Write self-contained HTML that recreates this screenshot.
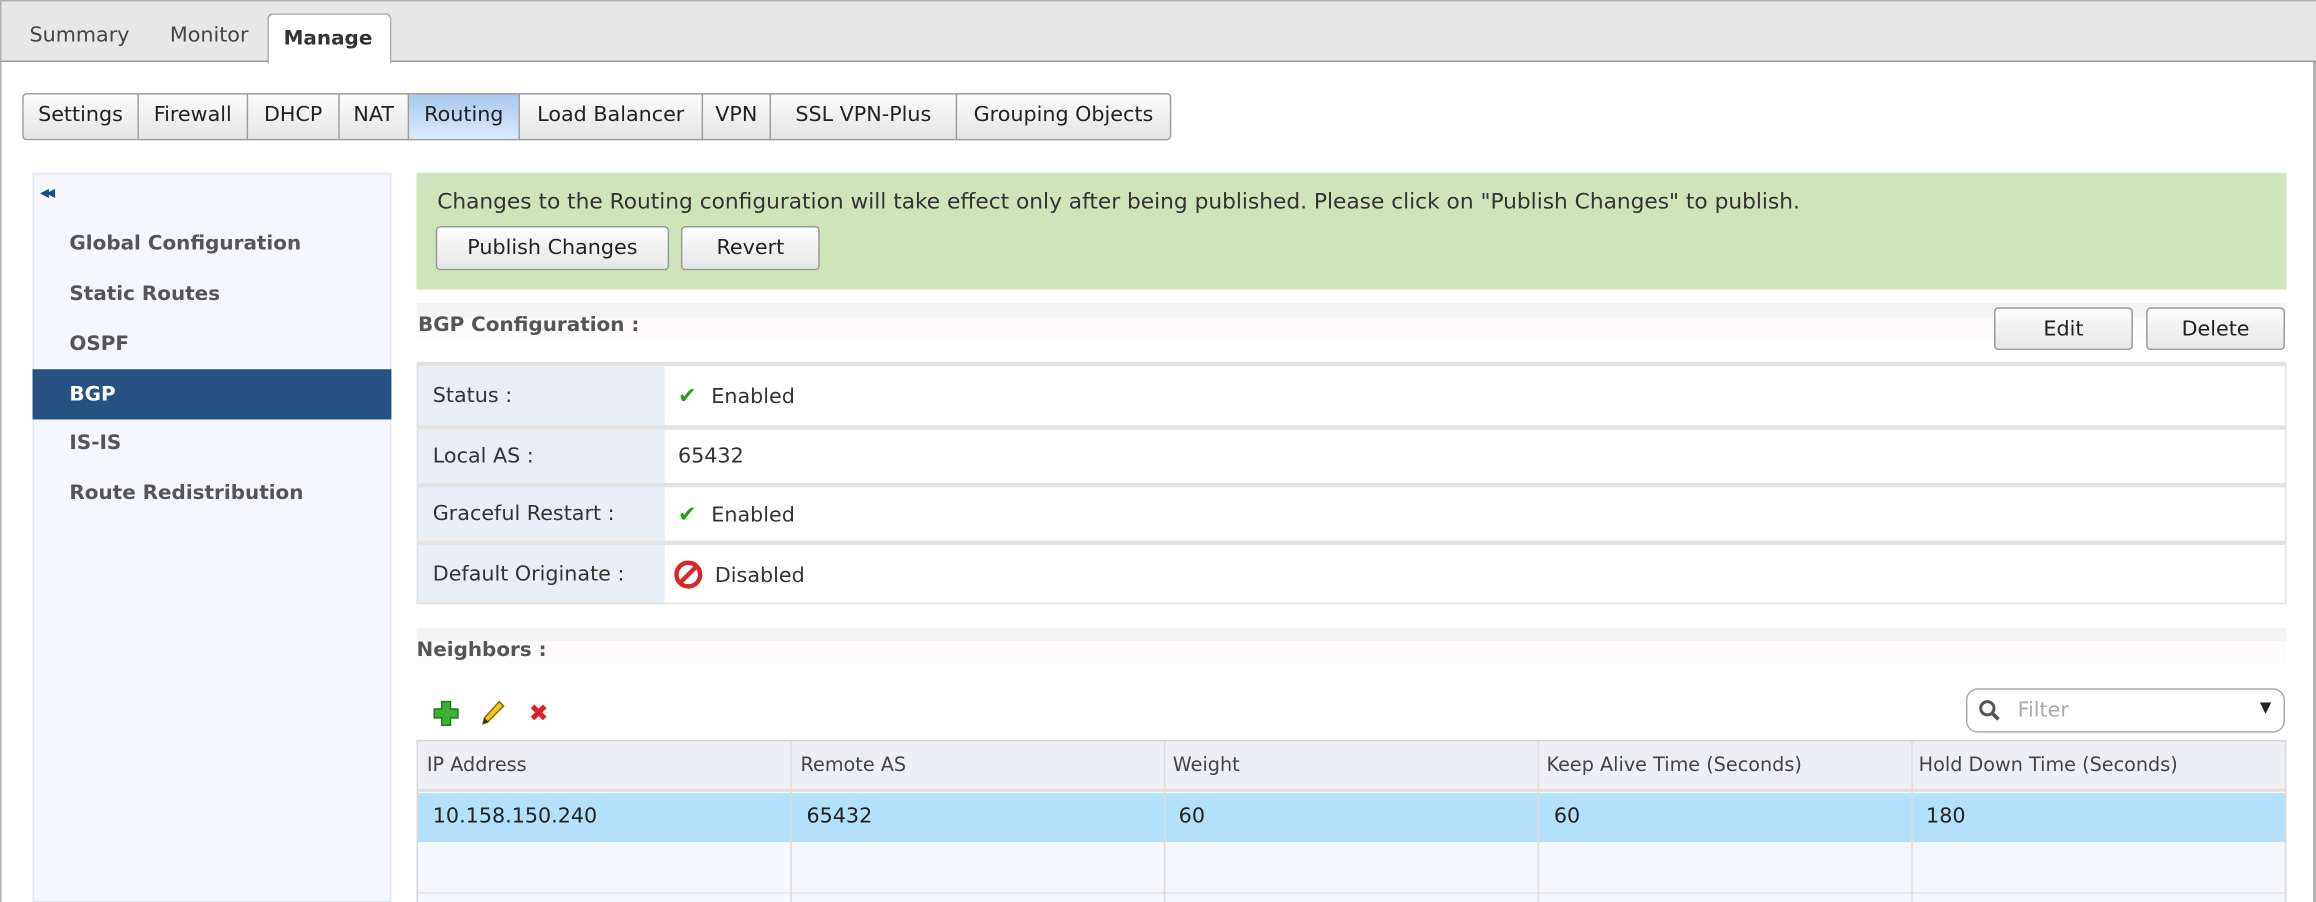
<!DOCTYPE html>
<html><head><style>
html,body{margin:0;padding:0;width:2316px;height:902px;overflow:hidden;background:#fff}
#w{position:absolute;left:0;top:0;width:1568px;height:611px;transform:scale(1.47704);transform-origin:0 0;font-family:"DejaVu Sans",sans-serif;font-size:14px;color:#333}
.a{position:absolute;box-sizing:border-box}
.t{position:absolute;white-space:nowrap}
.btn{position:absolute;box-sizing:border-box;border:1px solid #9a9a9a;border-radius:3px;background:linear-gradient(#fdfdfd,#e6e6e6);text-align:center;line-height:28px;font-size:14px;color:#222}
.st{position:absolute;top:63px;height:32px;box-sizing:border-box;border:1px solid #9c9c9c;border-right:none;background:linear-gradient(#fcfcfc,#e4e4e4);text-align:center;line-height:29px;font-size:14px;color:#222}
.nav{position:absolute;left:47px;font-weight:bold;color:#555;font-size:13.5px}
.row{position:absolute;left:283px;width:1264px;box-sizing:border-box;background:#fff}
.row .l{position:absolute;left:0;top:0;bottom:0;width:167px;background:#e7eef5}
.row .l span,.row .v{position:absolute;top:50%;transform:translateY(-50%);white-space:nowrap}
.row .l span{left:10px}
.row .v{left:176px}
.sep{position:absolute;left:282px;width:1266px;height:3px;background:#e3e3e3}
.col{position:absolute;top:502px;bottom:0;width:1px;background:#dcdcdc}
.h{font-size:13px;color:#444;top:511px}
</style></head><body><div id="w">
<div class="a" style="left:0;top:0;width:1568px;height:42px;background:#e7e7e7;border-top:1px solid #b0b0b0;border-left:1px solid #b0b0b0;border-bottom:1px solid #9a9a9a"></div>
<div class="t" style="left:20px;top:16px;color:#444">Summary</div>
<div class="t" style="left:115px;top:16px;color:#444">Monitor</div>
<div class="a" style="left:181px;top:9px;width:84px;height:34px;background:#fff;border:1px solid #a8a8a8;border-bottom:none;border-radius:4px 4px 0 0"></div>
<div class="t" style="left:192px;top:18px;font-weight:bold;color:#333;font-size:13.5px">Manage</div>
<div class="a" style="left:0;top:42px;width:1px;height:569px;background:#b0b0b0"></div>
<div class="a" style="left:1566px;top:42px;width:2px;height:569px;background:#b0b0b0"></div>
<div class="st" style="left:15px;width:78px;border-radius:3px 0 0 3px">Settings</div>
<div class="st" style="left:93px;width:74px">Firewall</div>
<div class="st" style="left:167px;width:62px">DHCP</div>
<div class="st" style="left:229px;width:47px">NAT</div>
<div class="st" style="left:276px;width:75px;background:linear-gradient(#a8c8ee,#dcebfb)">Routing</div>
<div class="st" style="left:351px;width:124px">Load Balancer</div>
<div class="st" style="left:475px;width:46px">VPN</div>
<div class="st" style="left:521px;width:126px">SSL VPN-Plus</div>
<div class="st" style="left:647px;width:146px;border-right:1px solid #9c9c9c;border-radius:0 3px 3px 0">Grouping Objects</div>
<div class="a" style="left:22px;top:117px;width:243px;height:494px;background:#f5f7fc;border:1px solid #e2e8f2"></div>
<div class="t" style="left:27px;top:126px;color:#1e4c80;font-size:8px;letter-spacing:-2px">◀◀</div>
<div class="nav" style="top:157px">Global Configuration</div>
<div class="nav" style="top:191px">Static Routes</div>
<div class="nav" style="top:225px">OSPF</div>
<div class="a" style="left:22px;top:250px;width:243px;height:34px;background:#255282"></div>
<div class="nav" style="top:259px;color:#fff">BGP</div>
<div class="nav" style="top:292px">IS-IS</div>
<div class="nav" style="top:326px">Route Redistribution</div>
<div class="a" style="left:282px;top:117px;width:1266px;height:79px;background:#d0e4bc"></div>
<div class="t" style="left:296px;top:128px;color:#333;font-size:14.7px">Changes to the Routing configuration will take effect only after being published. Please click on "Publish Changes" to publish.</div>
<div class="btn" style="left:295px;top:153px;width:158px;height:30px">Publish Changes</div>
<div class="btn" style="left:461px;top:153px;width:94px;height:30px">Revert</div>
<div class="a" style="left:282px;top:205px;width:1266px;height:10px;background:#f4f4f4"></div>
<div class="a" style="left:282px;top:215px;width:1266px;height:17px;background:#fefbfd"></div>
<div class="t" style="left:283px;top:212px;font-weight:bold;color:#555;font-size:13.5px">BGP Configuration :</div>
<div class="btn" style="left:1350px;top:208px;width:94px;height:29px">Edit</div>
<div class="btn" style="left:1453px;top:208px;width:94px;height:29px">Delete</div>
<div class="a" style="left:282px;top:245px;width:1266px;height:164px;border:1px solid #e0e0e0;background:#fff"></div>
<div class="sep" style="top:245px"></div>
<div class="row" style="top:248px;height:40px"><div class="l"><span>Status :</span></div><div class="v"><span style="color:#2aa016;font-weight:bold;margin-right:10px;font-size:15px">✔</span>Enabled</div></div>
<div class="sep" style="top:288px"></div>
<div class="row" style="top:291px;height:36px"><div class="l"><span>Local AS :</span></div><div class="v">65432</div></div>
<div class="sep" style="top:327px"></div>
<div class="row" style="top:330px;height:36px"><div class="l"><span>Graceful Restart :</span></div><div class="v"><span style="color:#2aa016;font-weight:bold;margin-right:10px;font-size:15px">✔</span>Enabled</div></div>
<div class="sep" style="top:366px"></div>
<div class="row" style="top:369px;height:39px"><div class="l"><span>Default Originate :</span></div><div class="v" style="left:173px"><svg width="20" height="20" viewBox="0 0 20 20" style="vertical-align:-5px;margin-right:8px"><circle cx="10" cy="10" r="8" fill="none" stroke="#d9262b" stroke-width="3"/><line x1="4.5" y1="15.5" x2="15.5" y2="4.5" stroke="#d9262b" stroke-width="3"/></svg>Disabled</div></div>
<div class="a" style="left:282px;top:425px;width:1266px;height:9px;background:#f4f4f4"></div>
<div class="a" style="left:282px;top:434px;width:1266px;height:16px;background:#fefbfd"></div>
<div class="t" style="left:282px;top:432px;font-weight:bold;color:#555;font-size:13.5px">Neighbors :</div>
<svg class="a" style="left:293px;top:474px" width="18" height="18" viewBox="0 0 18 18"><path d="M6 1h6v5h5v6h-5v5H6v-5H1V6h5z" fill="#3cb034" stroke="#1f7a1c" stroke-width="1"/></svg>
<svg class="a" style="left:324px;top:473px" width="20" height="20" viewBox="0 0 20 20"><path d="M3 17l1-4L14 2l3 3L6 16z" fill="#f5c518" stroke="#8a6a10" stroke-width="1"/><path d="M3 17l1-4 3 3z" fill="#333"/></svg>
<div class="t" style="left:358px;top:473px;color:#d8232a;font-weight:bold;font-size:16px">✖</div>
<div class="a" style="left:1331px;top:466px;width:216px;height:30px;border:1px solid #a8a8a8;border-radius:8px;background:#fff"></div>
<svg class="a" style="left:1339px;top:473px" width="16" height="16" viewBox="0 0 16 16"><circle cx="6.5" cy="6.5" r="4.5" fill="none" stroke="#555" stroke-width="2"/><line x1="10" y1="10" x2="14" y2="14" stroke="#555" stroke-width="2.5"/></svg>
<div class="t" style="left:1366px;top:473px;color:#aaa">Filter</div>
<div class="t" style="left:1530px;top:474px;font-size:10px;color:#222">▼</div>
<div class="a" style="left:282px;top:501px;width:1266px;height:110px;border:1px solid #d8d8d8;border-bottom:none;background:#f5f7fc"></div>
<div class="a" style="left:283px;top:502px;width:1264px;height:34px;background:#eeeff5;border-bottom:2px solid #dedede"></div>
<div class="a" style="left:283px;top:537px;width:1264px;height:33px;background:#b3e0fb"></div>
<div class="a" style="left:283px;top:604px;width:1264px;height:1px;background:#e6e6e6"></div>
<div class="col" style="left:535px"></div><div class="col" style="left:788px"></div><div class="col" style="left:1041px"></div><div class="col" style="left:1294px"></div>
<div class="t h" style="left:289px">IP Address</div>
<div class="t h" style="left:542px">Remote AS</div>
<div class="t h" style="left:794px">Weight</div>
<div class="t h" style="left:1047px">Keep Alive Time (Seconds)</div>
<div class="t h" style="left:1299px">Hold Down Time (Seconds)</div>
<div class="t" style="left:293px;top:545px;color:#222">10.158.150.240</div>
<div class="t" style="left:546px;top:545px;color:#222">65432</div>
<div class="t" style="left:798px;top:545px;color:#222">60</div>
<div class="t" style="left:1052px;top:545px;color:#222">60</div>
<div class="t" style="left:1304px;top:545px;color:#222">180</div>
</div></body></html>
